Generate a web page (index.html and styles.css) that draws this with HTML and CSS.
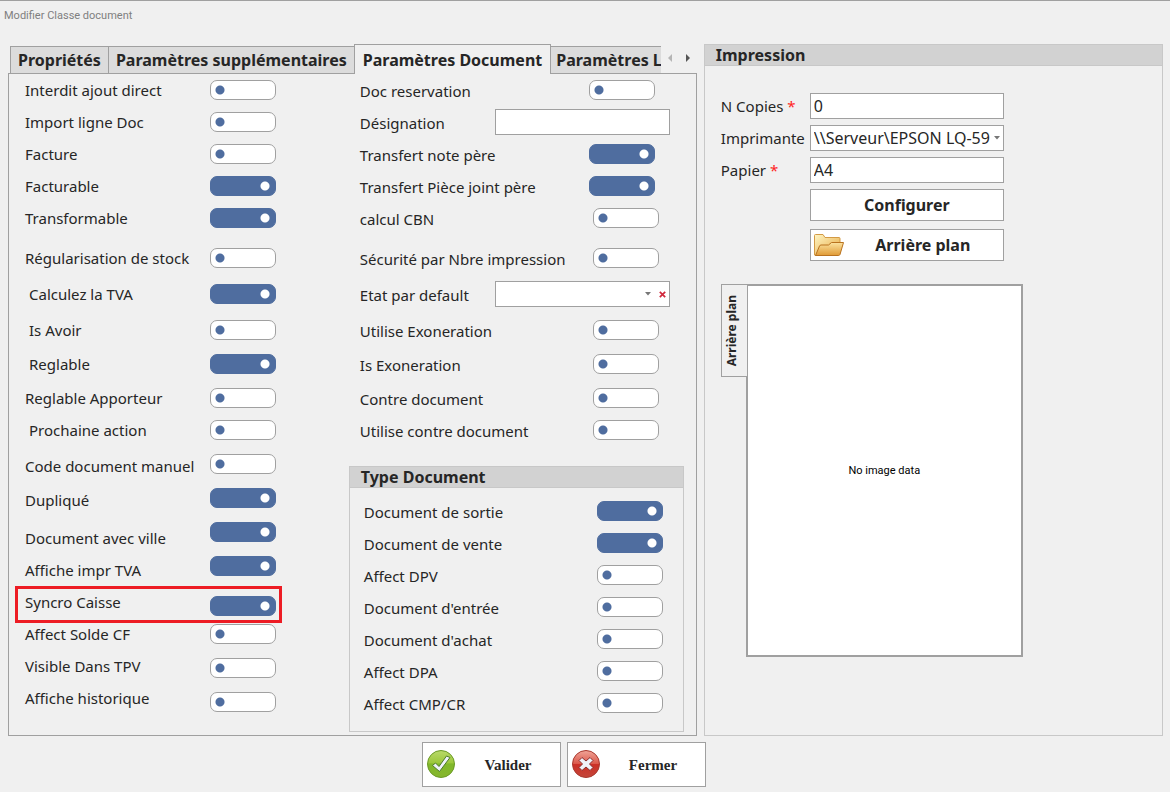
FILE: index.html
```html
<!DOCTYPE html>
<html lang="fr">
<head>
<meta charset="utf-8">
<title>Modifier Classe document</title>
<link rel="stylesheet" href="styles.css">
</head>
<body>
<h1 class="title">Modifier Classe document</h1>
<main class="main">
  <section class="tabs">
    <div class="tabbar">
      <div class="tablist" role="tablist">
        <button class="tab" role="tab" type="button">Propriétés</button>
        <button class="tab" role="tab" type="button">Paramètres supplémentaires</button>
        <button class="tab tab-on" role="tab" type="button" aria-selected="true">Paramètres Document</button>
        <button class="tab tab-last" role="tab" type="button">Paramètres L</button>
      </div>
      <button class="arrow" type="button" aria-label="Onglet précédent" disabled><svg width="4" height="8" viewBox="0 0 4 8"><path d="M4 0v8L0 4z" fill="#b5b5b5"/></svg></button>
      <button class="arrow" type="button" aria-label="Onglet suivant"><svg width="4" height="8" viewBox="0 0 4 8"><path d="M0 0v8l4-4z" fill="#555"/></svg></button>
    </div>
    <div class="panel">
      <div class="options">
        <div class="stack stack-labels">
          <label class="h32" for="a1">Interdit ajout direct</label>
          <label class="h32" for="a2">Import ligne Doc</label>
          <label class="h32" for="a3">Facture</label>
          <label class="h32" for="a4">Facturable</label>
          <label class="h32" for="a5">Transformable</label>
          <label class="h40" for="a6">Régularisation de stock</label>
          <label class="h36 indent" for="a7">Calculez la TVA</label>
          <label class="h36 indent" for="a8">Is Avoir</label>
          <label class="h34 indent" for="a9">Reglable</label>
          <label class="h34" for="a10">Reglable Apporteur</label>
          <label class="h32 indent" for="a11">Prochaine action</label>
          <label class="h36" for="a12">Code document manuel</label>
          <label class="h34" for="a13">Dupliqué</label>
          <label class="h38" for="a14">Document avec ville</label>
          <label class="h32" for="a15">Affiche impr TVA</label>
          <label class="h32 marked" for="a16">Syncro Caisse</label>
          <label class="h32" for="a17">Affect Solde CF</label>
          <label class="h32" for="a18">Visible Dans TPV</label>
          <label class="h32" for="a19">Affiche historique</label>
        </div>
        <div class="stack">
          <div class="h32"><input class="toggle" type="checkbox" id="a1"></div>
          <div class="h32"><input class="toggle" type="checkbox" id="a2"></div>
          <div class="h32"><input class="toggle" type="checkbox" id="a3"></div>
          <div class="h32"><input class="toggle" type="checkbox" id="a4" checked></div>
          <div class="h32"><input class="toggle" type="checkbox" id="a5" checked></div>
          <div class="h40"><input class="toggle" type="checkbox" id="a6"></div>
          <div class="h36"><input class="toggle" type="checkbox" id="a7" checked></div>
          <div class="h36"><input class="toggle" type="checkbox" id="a8"></div>
          <div class="h34"><input class="toggle" type="checkbox" id="a9" checked></div>
          <div class="h34"><input class="toggle" type="checkbox" id="a10"></div>
          <div class="h32"><input class="toggle" type="checkbox" id="a11"></div>
          <div class="h34"><input class="toggle" type="checkbox" id="a12"></div>
          <div class="h34"><input class="toggle" type="checkbox" id="a13" checked></div>
          <div class="h34"><input class="toggle" type="checkbox" id="a14" checked></div>
          <div class="h34"><input class="toggle" type="checkbox" id="a15" checked></div>
          <div class="h40"><input class="toggle" type="checkbox" id="a16" checked></div>
          <div class="h28"><input class="toggle" type="checkbox" id="a17"></div>
          <div class="h34"><input class="toggle" type="checkbox" id="a18"></div>
          <div class="h34"><input class="toggle" type="checkbox" id="a19"></div>
        </div>
      </div>
      <div class="second">
        <div class="rows">
          <div class="row h32 wide-end"><label for="b1">Doc reservation</label><input class="toggle" type="checkbox" id="b1"></div>
          <div class="row h32"><label for="b2">Désignation</label><input class="field" type="text" id="b2"></div>
          <div class="row h32 wide-end"><label for="b3">Transfert note père</label><input class="toggle" type="checkbox" id="b3" checked></div>
          <div class="row h32 wide-end"><label for="b4">Transfert Pièce joint père</label><input class="toggle" type="checkbox" id="b4" checked></div>
          <div class="row h32"><label for="b5">calcul CBN</label><input class="toggle" type="checkbox" id="b5"></div>
          <div class="row h40"><label for="b6">Sécurité par Nbre impression</label><input class="toggle" type="checkbox" id="b6"></div>
          <div class="row h36"><label for="b7">Etat par default</label>
            <span class="field combo"><select class="pick" id="b7"><option></option></select>
              <svg class="caret" width="6" height="4" viewBox="0 0 6 4"><path d="M0 0h6L3 3.5z" fill="#777"/></svg>
              <button class="clear" type="button" aria-label="Effacer"><svg width="7" height="7" viewBox="0 0 7 7"><path d="M.8.8l5.4 5.4M6.2.8L.8 6.2" stroke="#d0283c" stroke-width="1.7"/></svg></button></span></div>
          <div class="row h36"><label for="b8">Utilise Exoneration</label><input class="toggle" type="checkbox" id="b8"></div>
          <div class="row h34"><label for="b9">Is Exoneration</label><input class="toggle" type="checkbox" id="b9"></div>
          <div class="row h34"><label for="b10">Contre document</label><input class="toggle" type="checkbox" id="b10"></div>
          <div class="row h32"><label for="b11">Utilise contre document</label><input class="toggle" type="checkbox" id="b11"></div>
        </div>
        <section class="group type">
          <h2 class="group-title">Type Document</h2>
          <div class="type-rows">
            <div class="row h32"><label for="c1">Document de sortie</label><input class="toggle" type="checkbox" id="c1" checked></div>
            <div class="row h32"><label for="c2">Document de vente</label><input class="toggle" type="checkbox" id="c2" checked></div>
            <div class="row h32"><label for="c3">Affect DPV</label><input class="toggle" type="checkbox" id="c3"></div>
            <div class="row h32"><label for="c4">Document d'entrée</label><input class="toggle" type="checkbox" id="c4"></div>
            <div class="row h32"><label for="c5">Document d'achat</label><input class="toggle" type="checkbox" id="c5"></div>
            <div class="row h32"><label for="c6">Affect DPA</label><input class="toggle" type="checkbox" id="c6"></div>
            <div class="row h32"><label for="c7">Affect CMP/CR</label><input class="toggle" type="checkbox" id="c7"></div>
          </div>
        </section>
      </div>
    </div>
  </section>
  <section class="group">
    <h2 class="group-title">Impression</h2>
    <div class="print">
      <div class="print-grid">
        <label for="d1">N Copies <span class="req">*</span></label><input class="field" type="text" id="d1" value="0">
        <label for="d2">Imprimante</label>
        <span class="field combo"><select class="pick" id="d2"><option>\\Serveur\EPSON LQ-59</option></select>
          <svg class="caret" width="6" height="4" viewBox="0 0 6 4"><path d="M0 0h6L3 3.5z" fill="#777"/></svg></span>
        <label for="d3">Papier <span class="req">*</span></label><input class="field" type="text" id="d3" value="A4">
      </div>
      <div class="print-actions">
        <button class="btn" type="button">Configurer</button>
        <button class="btn" type="button">
          <svg class="icon" width="32" height="24" viewBox="0 0 32 24">
            <defs>
              <linearGradient id="fb" x1="0" y1="0" x2="1" y2="1"><stop offset="0" stop-color="#fff6c4"/><stop offset="1" stop-color="#e6a740"/></linearGradient>
              <linearGradient id="ff" x1="0" y1="0" x2="0" y2="1"><stop offset="0" stop-color="#fbe3a0"/><stop offset="1" stop-color="#e09a35"/></linearGradient>
            </defs>
            <path d="M1.500 22V2.500Q1.500 1.500 2.500 1.500H10L12 4.500H26Q27 4.500 27 5.500V20L25 22.500H2z" fill="url(#fb)" stroke="#d39a45"/>
            <path d="M2.500 22.500L6.500 13Q7 12 8 12H15.500L18.500 9.500H30.500L27 21.500Q26.500 22.500 25.500 22.500z" fill="url(#ff)" stroke="#b9721f"/>
          </svg>
          <span class="btn-text">Arrière plan</span></button>
      </div>
      <div class="preview">
        <button class="side-tab" type="button"><span class="side-text">Arrière plan</span></button>
        <div class="image">No image data</div>
      </div>
    </div>
  </section>
</main>
<footer class="footer">
  <button class="btn big" type="button">
    <svg class="icon" width="30" height="30" viewBox="0 0 30 30">
      <defs><linearGradient id="g" x1="0" y1="0" x2="0" y2="1"><stop offset="0" stop-color="#b9d96a"/><stop offset=".45" stop-color="#9cc83c"/><stop offset=".5" stop-color="#80b82a"/><stop offset="1" stop-color="#86b62c"/></linearGradient></defs>
      <circle cx="15" cy="14" r="13.500" fill="url(#g)" stroke="#6b9a27"/>
      <path d="M6.500 15.500l3-2.500 3.500 3.500L20.500 6l3.500 1.500L13.500 21.500z" fill="#eef2fa" stroke="#4d7a2a" stroke-linejoin="round"/>
    </svg>
    <span class="btn-text">Valider</span></button>
  <button class="btn big" type="button">
    <svg class="icon" width="30" height="30" viewBox="0 0 30 30">
      <defs><linearGradient id="r" x1="0" y1="0" x2="0" y2="1"><stop offset="0" stop-color="#f0a498"/><stop offset=".48" stop-color="#dc5a4c"/><stop offset=".52" stop-color="#cb2f26"/><stop offset="1" stop-color="#c4473a"/></linearGradient></defs>
      <circle cx="15" cy="14" r="13.500" fill="url(#r)" stroke="#a8382e"/>
      <path d="M11 7.500l4 3.500 4-3.500 3 3-3.500 3.500 3.500 3.500-3 3-4-3.500-4 3.500-3-3 3.500-3.500L8 10.500z" fill="#eef2fa" stroke="#8c2c2c" stroke-linejoin="round"/>
    </svg>
    <span class="btn-text">Fermer</span></button>
</footer>
</body>
</html>
```
FILE: styles.css
```css
*, *::after { box-sizing: border-box; }

body {
  margin: 0;
  min-height: 100vh;
  display: flex;
  flex-direction: column;
  background: #f0f0f0;
  border-top: 1px solid #a0a0a0;
  color: #262626;
  font: 15px/20px "Noto Sans", sans-serif;
}

button, input, select { font: inherit; color: inherit; }
button { cursor: pointer; }

.title {
  margin: 0;
  padding: 5px 4px 0;
  color: #7f7f7f;
  font-family: Roboto, sans-serif;
  font-size: 11px;
  font-weight: 400;
}

.main {
  flex: 1;
  display: grid;
  grid-template-columns: 3fr 2fr;
  gap: 7px;
  padding: 18px 7px 0 8px;
}

/* Tabs */
.tabs { display: flex; flex-direction: column; min-width: 0; }

.tabbar {
  display: flex;
  align-items: center;
  height: 30px;
  margin-bottom: -1px;
  z-index: 1;
}

.tablist {
  display: flex;
  align-items: flex-start;
  align-self: stretch;
  flex: 1;
  min-width: 0;
  overflow: hidden;
  padding-left: 2px;
}

.tab {
  flex: none;
  height: 28px;
  margin: 2px -1px 0 0;
  padding: 0 7px;
  border: 1px solid #a0a0a0;
  background: #dcdcdc;
  font-size: 16px;
  font-weight: 700;
  white-space: nowrap;
}

.tab-on {
  height: 30px;
  margin-top: 0;
  padding: 0 8px;
  border-bottom: 0;
  background: #f0f0f0;
}

.tab-last { padding-left: 5px; }

.arrow {
  width: 18px;
  height: 24px;
  padding: 0 0 4px;
  border: 0;
  background: none;
  line-height: 8px;
}

.panel {
  flex: 1;
  display: flex;
  justify-content: space-between;
  padding: 0 12px 3px 16px;
  border: 1px solid #a0a0a0;
}

/* Option lists */
.h28 { height: 28px; }
.h32 { height: 32px; }
.h34 { height: 34px; }
.h36 { height: 36px; }
.h38 { height: 38px; }
.h40 { height: 40px; }

.options { display: flex; }
.stack { display: flex; flex-direction: column; margin-top: -6px; }
.stack > * { display: flex; align-items: flex-end; }
.stack-labels { width: 185px; white-space: nowrap; }
.indent { padding-left: 4px; }

.marked { position: relative; }
.marked::after {
  content: "";
  position: absolute;
  top: 6px;
  left: -10px;
  width: 267px;
  height: 37px;
  border: 3px solid #ed1c24;
  pointer-events: none;
}

.toggle {
  appearance: none;
  width: 66px;
  height: 20px;
  margin: 0;
  border: 1px solid #a0a0a0;
  border-radius: 7px;
  background: radial-gradient(circle at 9px 9px, #4f6d9f 4px, transparent 5px) #fff;
}

.toggle:checked {
  border-color: #4f6d9f;
  background: radial-gradient(circle at 54px 9px, #fff 4px, transparent 5px) #4f6d9f;
}

.second {
  display: flex;
  flex-direction: column;
  justify-content: space-between;
  width: 335px;
}

.rows { padding: 0 14px 0 11px; margin-top: -6px; }
.row { display: flex; align-items: flex-end; justify-content: space-between; white-space: nowrap; }
.row label { line-height: 18px; }
.row .toggle { margin-right: 11px; }
.wide-end .toggle { margin-right: 15px; }
.row .field { width: 175px; margin-bottom: -3px; }

.field {
  height: 26px;
  min-width: 0;
  padding: 0 3px;
  border: 1px solid #a0a0a0;
  border-radius: 0;
  background: #fff;
  font-size: 16px;
}

.combo { display: flex; align-items: center; gap: 4px; }

.pick {
  appearance: none;
  flex: 1;
  min-width: 0;
  height: 24px;
  padding: 0;
  border: 0;
  background: none;
}

.caret { flex: none; }
.clear { display: flex; margin-right: -4px; padding: 4px; border: 0; background: none; }

/* Group boxes */
.group { border: 1px solid #c8c8c8; min-width: 0; }

.group-title {
  margin: 0;
  padding: 0 11px;
  border-bottom: 1px solid #c8c8c8;
  background: #d2d2d2;
  font-size: 16px;
  line-height: 20px;
}

.type-rows { padding: 1px 9px 18px 14px; }

.print { padding: 27px 16px; }

.print-grid, .print-actions, .preview { max-width: 302px; }

.print-grid {
  display: grid;
  grid-template-columns: 89px 194px;
  row-gap: 6px;
  align-items: center;
}

.req { color: #f22; }

.print-actions {
  display: grid;
  gap: 8px;
  width: 194px;
  margin: 6px 0 0 89px;
}

.btn {
  display: flex;
  align-items: center;
  justify-content: center;
  height: 32px;
  padding: 0 2px;
  border: 1px solid #a0a0a0;
  background: #fff;
  font-size: 16px;
  font-weight: 700;
}

.icon { flex: none; }
.btn-text { flex: 1; text-align: center; }

.preview { display: flex; align-items: flex-start; margin-top: 23px; }

.side-tab {
  display: flex;
  align-items: center;
  justify-content: center;
  height: 93px;
  width: 27px;
  margin-right: -2px;
  padding: 0 4px 0 0;
  border: 1px solid #a0a0a0;
  background: #f0f0f0;
  font-size: 12px;
  font-weight: 700;
  z-index: 1;
}

.side-text { writing-mode: vertical-rl; transform: rotate(180deg); }

.image {
  flex: 1;
  display: flex;
  align-items: center;
  justify-content: center;
  height: 373px;
  border: 2px solid #a0a0a0;
  background: #fff;
  color: #000;
  font-family: Roboto, sans-serif;
  font-size: 11px;
}

.footer {
  display: flex;
  justify-content: center;
  gap: 6px;
  padding: 6px 42px 5px 0;
}

.big {
  width: 139px;
  height: 45px;
  padding: 0 0 0 3px;
  font-family: "Liberation Serif", serif;
  font-size: 15px;
}
```
